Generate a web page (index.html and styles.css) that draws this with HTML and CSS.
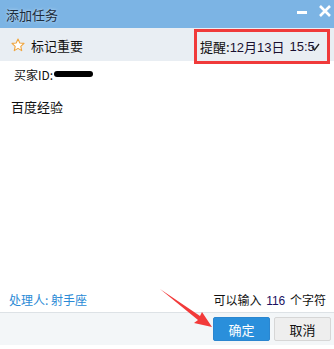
FILE: index.html
```html
<!DOCTYPE html>
<html lang="zh-CN">
<head>
  <meta charset="UTF-8" />
  <title>添加任务</title>
  <link rel="stylesheet" href="styles.css">
</head>
<body>
  <div class="dialog">
    <div class="titlebar">
      <span class="title">添加任务</span>
      <div class="controls">
        <span class="min"></span>
        <svg class="close" width="12" height="12" viewBox="0 0 12 12">
          <path d="M1 1 L11 11 M11 1 L1 11" stroke="#fff" stroke-width="2.6"/>
        </svg>
      </div>
    </div>

    <div class="toolbar">
      <div class="mark">
        <svg class="star" width="14" height="14" viewBox="0 0 14 14">
          <path d="M7 1 L8.8 5 L13 5.4 L9.8 8.3 L10.7 12.6 L7 10.4 L3.3 12.6 L4.2 8.3 L1 5.4 L5.2 5 Z" fill="#fff" stroke="#f0a43c" stroke-width="1.1" stroke-linejoin="round"/>
        </svg>
        <span>标记重要</span>
      </div>
      <div class="remind">
        <span class="label">提醒:</span><span class="date">12月13日</span><span class="time">15:5</span>
        <svg class="tick" width="9" height="8" viewBox="0 0 9 8">
          <path d="M1 4 L3.5 7 L8 1" fill="none" stroke="#222" stroke-width="1.3"/>
        </svg>
      </div>
    </div>

    <div class="content">
      <div class="buyer">买家ID:<span class="blot"></span></div>
      <div class="text">百度经验</div>
    </div>

    <div class="infoline">
      <span class="handler">处理人: 射手座</span>
      <span class="count">可以输入 <b>116</b> 个字符</span>
    </div>

    <div class="footer">
      <button class="btn ok">确定</button>
      <button class="btn cancel">取消</button>
    </div>
  </div>

  <svg class="arrow" width="60" height="50" viewBox="0 0 60 50">
    <path d="M0 0 L40 27 L42 23 L52 38 L34 34 L38 31 Z" fill="#f23a3a"/>
  </svg>
</body>
</html>
```

FILE: styles.css
```css
body {
  margin: 0;
  padding: 0;
  width: 334px;
  height: 349px;
  background: #fff;
  font-family: "Noto Sans CJK SC", "Liberation Sans", sans-serif;
  font-size: 12px;
  color: #111;
  position: relative;
  overflow: hidden;
}
.dialog {
  display: flex;
  flex-direction: column;
  height: 349px;
}
.titlebar {
  height: 28px;
  background: #7cb4e4;
  display: flex;
  align-items: center;
  justify-content: space-between;
  padding: 0 3px 0 6px;
}
.title {
  font-size: 13px;
  color: #1d2c3c;
  text-shadow: 0 0 3px #cfe4f6;
}
.controls {
  display: flex;
  align-items: center;
  gap: 12px;
  margin-top: -6px;
}
.min {
  width: 10px;
  height: 3px;
  background: #fff;
  margin-top: 2px;
}
.toolbar {
  height: 33px;
  background: #e9eef3;
  display: flex;
  align-items: flex-start;
  justify-content: space-between;
  padding: 0 4px 0 11px;
}
.mark {
  display: flex;
  align-items: center;
  gap: 6px;
  font-size: 13px;
  height: 33px;
  margin-top: 1px;
}
.star {
  margin-top: -1px;
}
.remind {
  box-sizing: border-box;
  width: 136px;
  height: 35px;
  margin-top: 1px;
  border: 3px solid #f03a3a;
  display: flex;
  align-items: center;
  padding: 0 0 1px 3px;
  font-size: 13px;
  white-space: nowrap;
  overflow: hidden;
}
.date, .time {
  font-family: "Liberation Sans", "Noto Sans CJK SC", sans-serif;
  color: #1a1030;
}
.date {
  margin-right: 5px;
}
.tick {
  margin-left: -4px;
  margin-top: 2px;
}
.content {
  flex: 1;
  padding: 3px 11px 0;
}
.buyer {
  font-size: 12px;
  padding-left: 3px;
  display: flex;
  align-items: center;
  height: 20px;
}
.blot {
  display: inline-block;
  width: 39px;
  height: 6px;
  background: #000;
  border-radius: 4px;
  margin-left: 1px;
}
.text {
  margin-top: 13px;
  font-size: 13px;
}
.infoline {
  display: flex;
  justify-content: space-between;
  align-items: center;
  height: 20px;
  padding: 0 8px 0 9px;
  margin-bottom: 3px;
}
.handler {
  color: #2a8ad6;
  font-size: 12px;
}
.count {
  font-size: 12px;
}
.count b {
  font-weight: normal;
  font-family: "Liberation Sans", sans-serif;
  color: #1a1060;
  margin: 0 2px;
}
.footer {
  height: 32px;
  background: #f3f6f8;
  border-top: 1px solid #dde2e6;
  display: flex;
  justify-content: flex-end;
  align-items: center;
  gap: 4px;
  padding-right: 3px;
  margin-bottom: 4px;
}
.btn {
  width: 57px;
  height: 24px;
  border-radius: 2px;
  font-family: "Noto Sans CJK SC", sans-serif;
  font-size: 13px;
  padding: 0;
}
.ok {
  background: #2a8fdb;
  border: 1px solid #2a86d0;
  color: #fff;
}
.cancel {
  background: #eeeeee;
  border: 1px solid #d6d6d6;
  color: #111;
}
.arrow {
  position: absolute;
  left: 160px;
  top: 289px;
}
```
